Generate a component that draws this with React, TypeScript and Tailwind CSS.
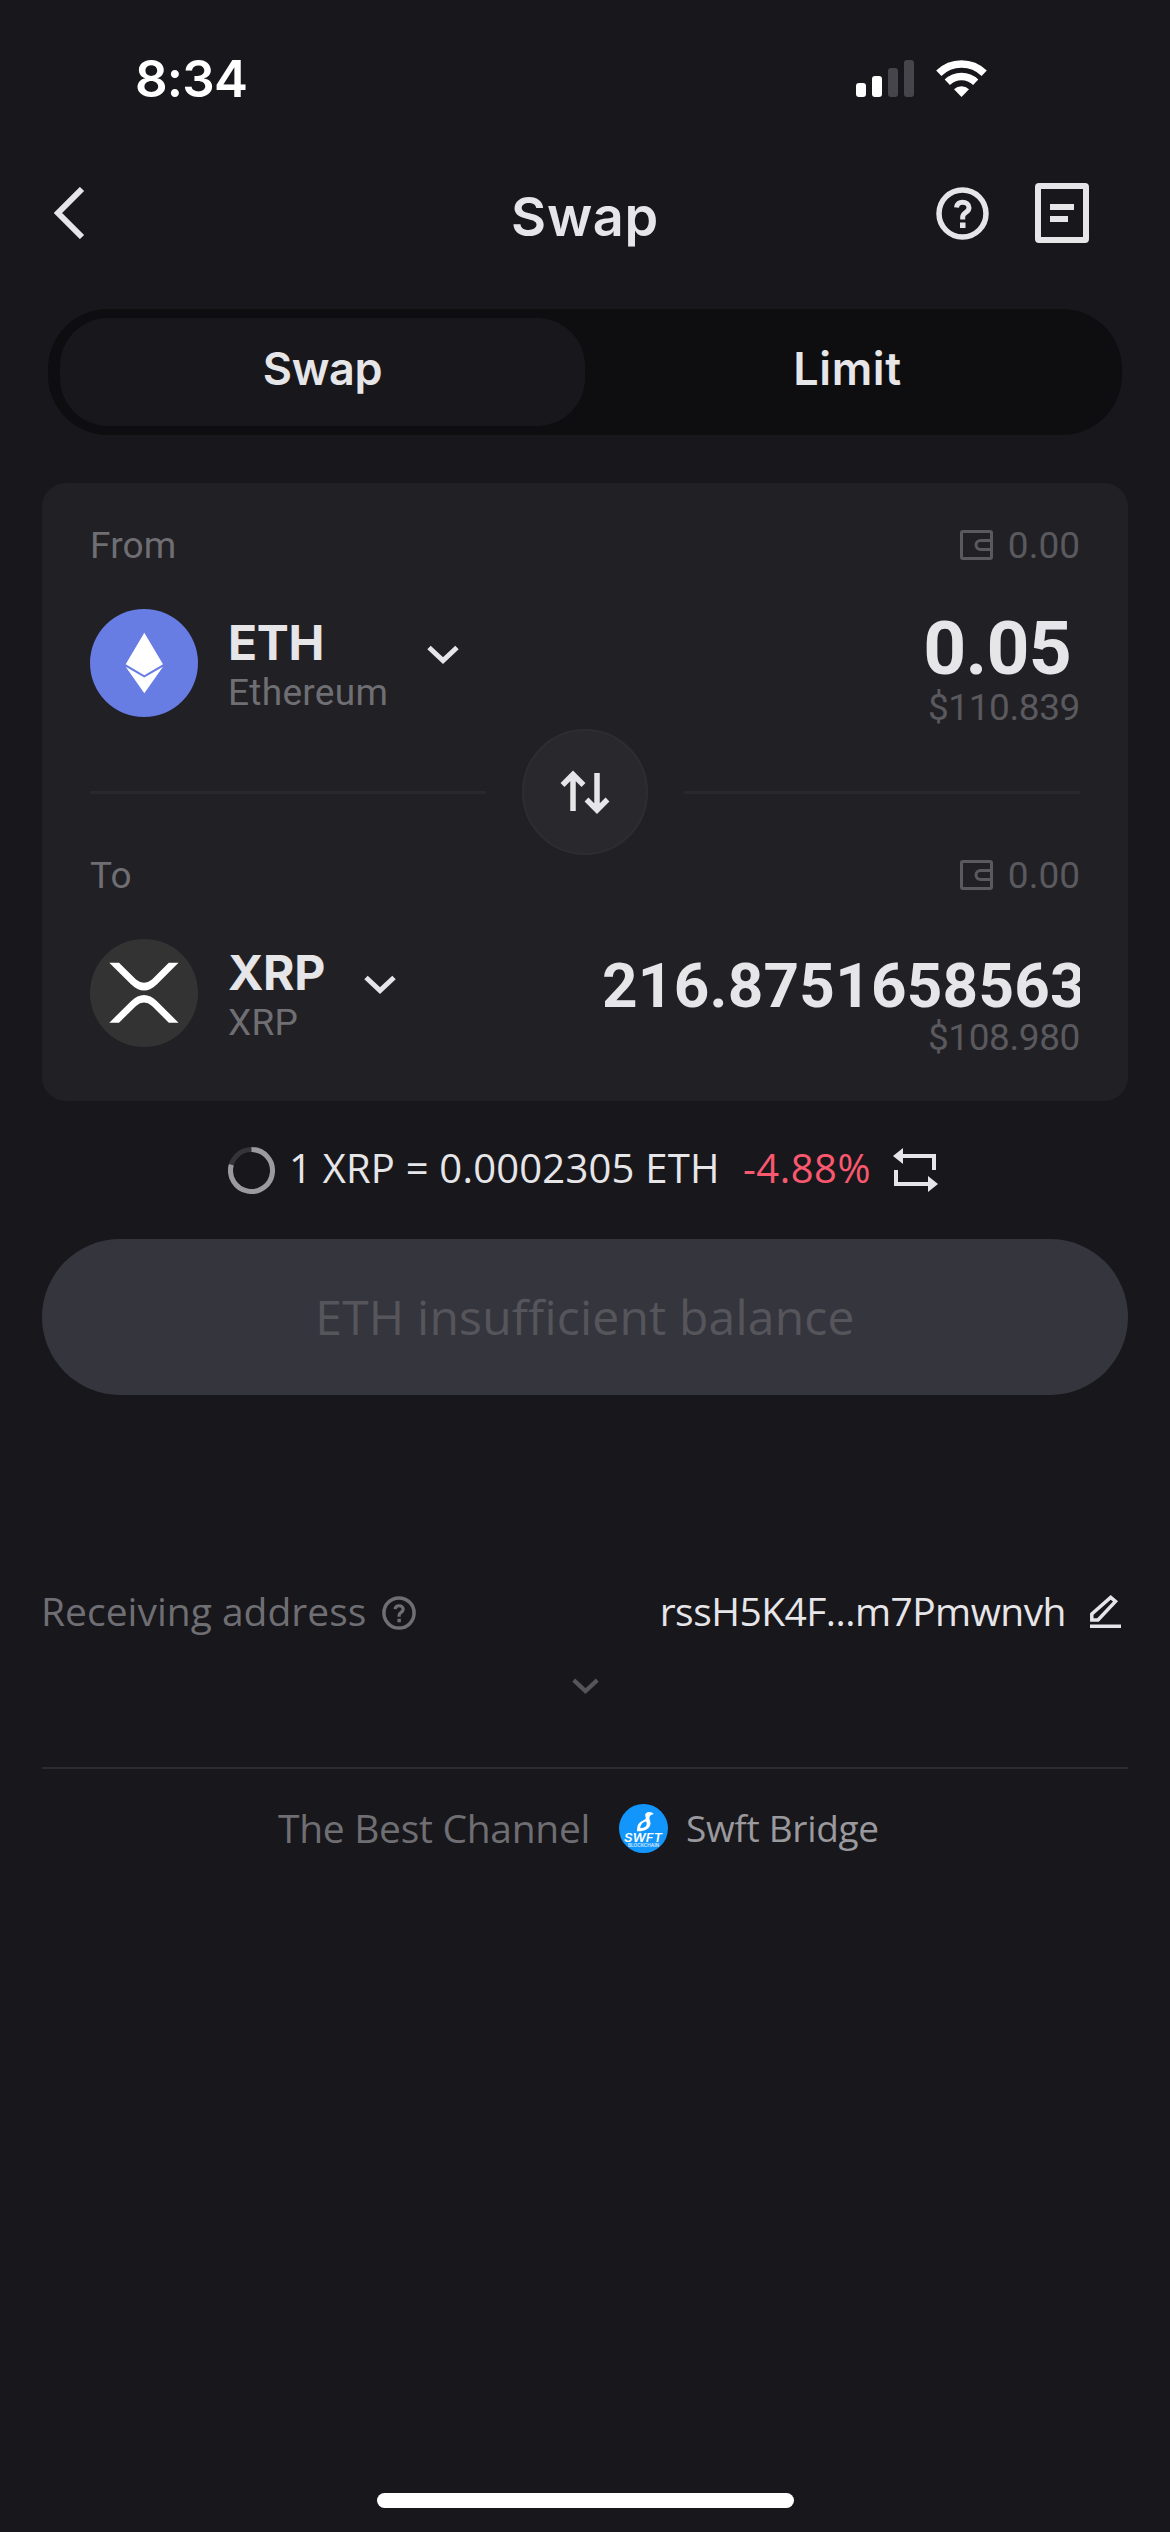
import type { ReactNode } from "react";
import clsx from "clsx";

const EthLogo = () => (
  <svg viewBox="0 0 108 108" className="size-[108px] shrink-0">
    <circle cx="54" cy="54" r="54" fill="#677de3" />
    <path
      d="M54.3 23.7 73 55.2 54.3 66.3 35.7 55.2ZM35.7 57.8 54.3 68.6 73 57.8 54.3 84.3Z"
      fill="#fff"
    />
  </svg>
);

const XrpLogo = () => (
  <svg viewBox="0 0 108 108" className="size-[108px] shrink-0">
    <circle cx="54" cy="54" r="54" fill="#333333" />
    <path
      d="M19.3 23.7h9.7L46 40.5q8 6.6 16 0L78.8 23.7h9.7L67 45.2q-13 12.6-26 0ZM19.3 83.7h9.7L46 66.9q8-6.6 16 0L78.8 83.7h9.7L67 62.2q-13-12.6-26 0Z"
      fill="#fff"
    />
  </svg>
);

const SwftLogo = () => (
  <svg viewBox="0 0 49 49" className="size-[49px] shrink-0">
    <circle cx="24.5" cy="24.5" r="24.5" fill="#1296fb" />
    <path
      d="M34.8 10c-1.8-2.4-6.6-3-8.3-.2-1 1.9.8 3.4.2 5.2-2.2 1.4-7.8 3.2-8.4 8.3l-.4 4c7 .4 13.400-2 13.600-8 0-2.600-1.700-4.400-.9-6.600.6-1.400 2-2.300 4.200-2.700ZM21.300 24.300c.2-4.200 2.600-5.900 5.900-6.700 2 4.200-1.600 6.600-5.900 6.700Z"
      fill="#fff"
      fillRule="evenodd"
    />
    <text
      x="5"
      y="37.5"
      textLength="38"
      lengthAdjust="spacingAndGlyphs"
      className="fill-white font-['Inter'] text-[12px] font-semibold italic"
    >
      SWFT
    </text>
    <text
      x="9"
      y="43"
      textLength="31"
      lengthAdjust="spacingAndGlyphs"
      className="fill-white/80 font-['Inter'] text-[4.5px] font-semibold"
    >
      BLOCKCHAIN
    </text>
  </svg>
);

const Chevron = ({ className }: { className?: string }) => (
  <svg viewBox="0 0 32 19" fill="none" className={clsx("shrink-0", className)}>
    <path d="M2 2.5 16 15.5 30 2.5" stroke="currentColor" strokeWidth="5" />
  </svg>
);

const Wallet = () => (
  <svg viewBox="0 0 33 30" fill="none" className="h-[30px] w-[33px]">
    <rect x="1.5" y="1.5" width="30" height="27" rx="1.5" stroke="currentColor" strokeWidth="3" />
    <path d="M32 10.5H20.5a4.5 4.5 0 0 0 0 9H32" stroke="currentColor" strokeWidth="3" />
  </svg>
);

const Help = ({ className }: { className?: string }) => (
  <svg viewBox="0 0 53 53" fill="none" className={clsx("shrink-0", className)}>
    <circle cx="26.5" cy="26.5" r="23.5" stroke="currentColor" strokeWidth="5.5" />
    <path
      d="M20.5 20.5c.3-3.6 2.9-5.3 6-5.3 3.6 0 6.500 2 6.500 5.500 0 5-6.300 4.700-6.300 9.300v2.500"
      stroke="currentColor"
      strokeWidth="5"
    />
    <path d="M24 35.5h5.5v5.5H24z" fill="currentColor" />
  </svg>
);

const StatusBar = () => (
  <div className="flex h-[156px] items-center justify-between pr-[183px] pl-[135px]">
    <span className="font-['Inter'] text-[51px] leading-none font-semibold tracking-[-0.8px] text-white">
      8:34
    </span>
    <div className="flex items-end gap-[22px] text-white">
      <div className="flex items-end gap-1.5">
        <span className="h-[14px] w-2.5 rounded-[3px] bg-white" />
        <span className="h-[21px] w-2.5 rounded-[3px] bg-white" />
        <span className="h-[29px] w-2.5 rounded-[3px] bg-[#46454b]" />
        <span className="h-[37px] w-2.5 rounded-[3px] bg-[#46454b]" />
      </div>
      <svg viewBox="0 0 51 37" fill="none" className="h-[37px] w-[51px]">
        <path d="M2.8 13.3a32.5 32.5 0 0 1 45.4 0" stroke="currentColor" strokeWidth="7.5" />
        <path d="M11.3 22.2a20.5 20.5 0 0 1 28.4 0" stroke="currentColor" strokeWidth="7.5" />
        <path d="M25.5 37 18 29.3a10.8 10.8 0 0 1 15 0Z" fill="currentColor" />
      </svg>
    </div>
  </div>
);

const Header = () => (
  <header className="grid h-[114px] grid-cols-3 items-center pr-[81px] pl-[54px]">
    <svg viewBox="0 0 31 52" fill="none" className="h-[52px] w-[31px]">
      <path d="M28 2 4 26 28 50" stroke="currentColor" strokeWidth="6" />
    </svg>
    <h1 className="pt-2 pl-[27px] text-center font-['Inter'] text-[54px] leading-none font-semibold tracking-[0.7px]">
      Swap
    </h1>
    <div className="flex items-center justify-end gap-[46px]">
      <Help className="size-[53px]" />
      <svg viewBox="0 0 54 60" fill="none" className="h-[60px] w-[54px]">
        <rect x="3" y="3" width="48" height="54" rx="1" stroke="currentColor" strokeWidth="6" />
        <path d="M15 24h24M15 36h18" stroke="currentColor" strokeWidth="6" />
      </svg>
    </div>
  </header>
);

const Tabs = () => (
  <div className="mx-12 mt-[39px] flex h-[126px] rounded-[60px] bg-[#0e0d0f] px-3 py-[9px] font-['Inter'] text-[45px] leading-none font-semibold">
    <button className="w-[525px] rounded-[48px] bg-[#18171c] pb-2 tracking-[-0.4px]">
      Swap
    </button>
    <button className="flex-1 pb-2 tracking-[0.6px]">Limit</button>
  </div>
);

const BalanceRow = ({ label }: { label: string }) => (
  <div className="flex h-10 items-center justify-between text-[37px] leading-none">
    <span className="tracking-[0.2px] text-[#6f6e73]">{label}</span>
    <span className="flex items-center gap-[15px] text-[#5a595e]">
      <Wallet />
      0.00
    </span>
  </div>
);

type TokenRowProps = {
  logo: ReactNode;
  symbol: string;
  name: string;
  amount: ReactNode;
  fiat: string;
};

const TokenRow = ({ logo, symbol, name, amount, fiat }: TokenRowProps) => (
  <div className="mt-11 flex h-[108px] justify-between">
    <div className="flex items-center">
      {logo}
      <div className="ml-[30px] flex h-full flex-col pt-[9px]">
        <span className="font-['Inter'] text-[48px] leading-[49px] font-bold tracking-[-0.4px]">
          {symbol}
        </span>
        <span className="text-[37px] leading-[52px] tracking-[0.3px] text-[#6f6e73]">
          {name}
        </span>
      </div>
      <Chevron className="mb-[17px] ml-[39px] h-[19px] w-8" />
    </div>
    <div className="flex flex-col items-end pt-1.5 font-bold">
      {amount}
      <span className="text-[37px] leading-[55px] font-normal tracking-[-0.4px] text-[#5a595e]">
        {fiat}
      </span>
    </div>
  </div>
);

const SwapCard = () => (
  <section className="mx-[42px] mt-12 h-[618px] rounded-3xl bg-[#212025] px-12 pt-[42px]">
    <BalanceRow label="From" />
    <TokenRow
      logo={<EthLogo />}
      symbol="ETH"
      name="Ethereum"
      amount={
        <span className="-mb-px pr-[9px] text-[75px] leading-[66px] tracking-[-0.8px]">0.05</span>
      }
      fiat="$110.839"
    />
    <div className="mt-3 flex h-[126px] items-center justify-between">
      <span className="h-[3px] w-[396px] bg-[#29282d]" />
      <button className="size-[126px] rounded-full border-2 border-[#2e2d32] bg-[#29282d]">
        <svg viewBox="2 2 122 122" fill="none" className="size-full">
          <path
            d="M51 82V46M40.5 56 51 45.5 61.5 56M75 44v36M64.5 70.5 75 81 85.5 70.5"
            stroke="currentColor"
            strokeWidth="5.5"
          />
        </svg>
      </button>
      <span className="h-[3px] w-[396px] bg-[#29282d]" />
    </div>
    <BalanceRow label="To" />
    <TokenRow
      logo={<XrpLogo />}
      symbol="XRP"
      name="XRP"
      amount={
        <span className="-mb-4 w-[478px] shrink-0 overflow-hidden text-[62px] leading-[81px] tracking-[0.25px] whitespace-nowrap">
          216.8751658563
        </span>
      }
      fiat="$108.980"
    />
  </section>
);

const RateRow = () => (
  <div className="flex h-[138px] items-center pl-[228px] font-['Open_Sans',sans-serif] text-[40px] leading-none">
    <svg viewBox="0 0 47 47" fill="none" className="size-[47px] shrink-0">
      <circle cx="23.5" cy="23.5" r="21" stroke="#35343a" strokeWidth="5" />
      <path d="M23.5 2.5A21 21 0 1 1 3.3 17.8" stroke="#9b9a9f" strokeWidth="5" />
    </svg>
    <span className="ml-3.5 w-[454px] pb-[5px] tracking-[0.2px] whitespace-pre">
      1 XRP = 0.0002305 ETH
    </span>
    <span className="w-[150px] pb-[5px] tracking-[0.5px] text-[#f9586f]">-4.88%</span>
    <svg viewBox="0 0 45 44" fill="none" className="h-[44px] w-[45px]">
      <path d="M8 8h33v14M3 22v14h33" stroke="currentColor" strokeWidth="4" />
      <path d="M0 8 10 0v16ZM45 36 35 28v16Z" fill="currentColor" />
    </svg>
  </div>
);

const AddressRow = () => (
  <div className="mt-[186px] flex h-[60px] items-center justify-between pr-[49px] pl-[41px] font-['Open_Sans',sans-serif] text-[39px] leading-none">
    <span className="flex items-center gap-4 text-[#6f6e73]">
      <span className="pb-0.5">Receiving address</span>
      <Help className="mt-1 size-[34px]" />
    </span>
    <span className="flex items-center gap-6">
      <span className="pb-0.5 tracking-[-0.55px]">rssH5K4F...m7Pmwnvh</span>
      <svg viewBox="0 0 31 33" fill="none" className="h-[33px] w-[31px]">
        <path
          d="M1.8 25V19L20.7 2.4 25.5 6.5 8 25ZM0 31.3h31"
          stroke="currentColor"
          strokeWidth="3.5"
        />
      </svg>
    </span>
  </div>
);

const App = () => {
  return (
    <main className="flex h-[2532px] w-[1170px] flex-col bg-[#18171c] font-['Roboto',sans-serif] text-[#e6e5e8]">
      <StatusBar />
      <Header />
      <Tabs />
      <SwapCard />
      <RateRow />
      <button className="mx-[42px] h-[156px] shrink-0 rounded-full bg-[#35353e] pb-px font-['Open_Sans',sans-serif] text-[48px] leading-none tracking-[0.2px] text-[#56555b]">
        ETH insufficient balance
      </button>
      <AddressRow />
      <div className="flex h-[90px] items-center justify-center text-[#56555b]">
        <Chevron className="h-[16px] w-[27px]" />
      </div>
      <div className="mx-[42px] mt-9 h-0.5 bg-[#2c2b30]" />
      <div className="flex h-[118px] items-center pl-[278px] font-['Open_Sans',sans-serif] text-[39px] leading-none">
        <span className="w-[341px] pb-0.5 tracking-[-0.3px] text-[#6f6e73]">
          The Best Channel
        </span>
        <SwftLogo />
        <span className="ml-[18px] pb-0.5 text-[37px] tracking-[-0.3px] text-[#9a999e]">
          Swft Bridge
        </span>
      </div>
      <div className="mx-auto mt-auto mb-6 h-[15px] w-[417px] rounded-full bg-white" />
    </main>
  );
};

export default App;
